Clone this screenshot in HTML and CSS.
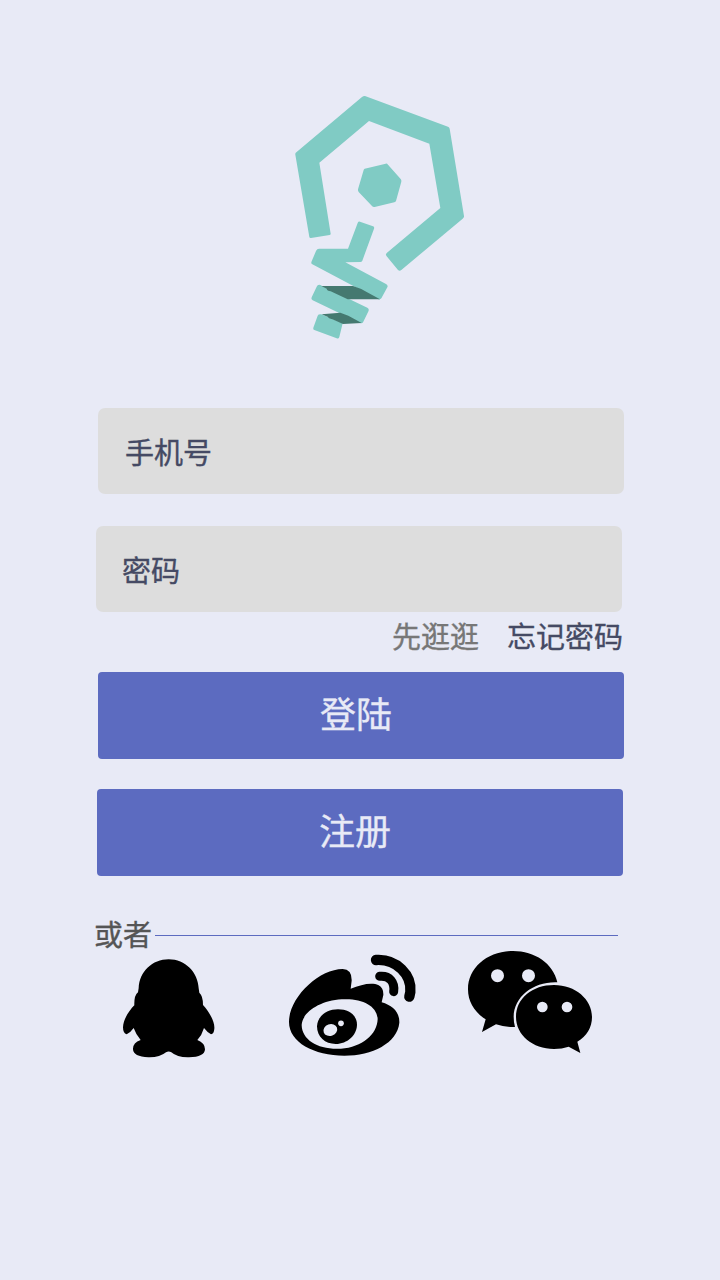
FILE: index.html
```html
<!DOCTYPE html>
<html lang="zh-CN">
<head>
<meta charset="utf-8">
<title>登陆</title>
<link rel="stylesheet" href="styles.css">
</head>
<body>
<main class="login">
  <svg class="logo" viewBox="0 0 600 795" aria-hidden="true">
    <g class="logo-light">
      <path d="M246 36Q253 30 261 35L504 125Q508 127 509 131L552 393Q553 397 548 401L364 555Q359 560 354 555L320 514Q315 508 321 503L481 369L448 176L267 108L118 233L152 446Q153 449 149 450L93 459Q89 460 88 456L46 209Q45 205 49 202Z"/>
      <path d="M254 251L317 236Q321 235 324 239L362 282Q365 286 364 290L348 348Q347 351 343 352L284 366Q279 367 276 363L236 321Q233 317 234 313L251 255Q252 252 254 251Z"/>
      <path d="M240 410L279 424Q284 426 282 431L247 527Q245 531 241 531L196 532L318 597Q325 601 322 607L304 640Q301 644 295 643L97 538Q92 535 95 529L108 498Q111 491 117 491L204 491L233 414Q235 409 240 410Z"/>
      <path d="M115 600Q119 597 125 602L262 668Q268 671 266 677L250 710Q247 716 240 714L98 646Q92 643 95 637L110 605Q112 601 115 600Z"/>
      <path d="M113 692Q115 687 124 688L188 715L178 756Q176 762 170 760L103 735Q98 733 100 728Z"/>
    </g>
    <g class="logo-dark">
      <path d="M124 603H219Q240 609 260 621L300 643H203L152 619Q141 617 140 611Z"/>
      <path d="M125 688L181 683L205 692L245 714L189 717L157 703Q145 700 144 696Z"/>
    </g>
  </svg>

  <form class="form">
    <div class="field field-phone">手机号</div>
    <div class="field field-password">密码</div>
    <div class="links"><a class="browse">先逛逛</a><a class="forgot">忘记密码</a></div>
    <div class="button button-login">登陆</div>
    <div class="button button-register">注册</div>
  </form>

  <div class="divider"><span class="divider-text">或者</span><i class="rule"></i></div>

  <div class="social">
    <svg class="qq" viewBox="0 0 360 360" aria-label="QQ">
      <path d="M176 43C226 43 264 82 266 130L268 143Q279 152 279 180C296 198 315 229 313 251Q312 266 303 268Q292 262 282 249Q276 270 262 285Q285 294 285 313Q284 336 237 337Q202 338 184 322Q176 317 168 322Q149 338 115 337Q70 335 69 313Q68 293 92 285Q78 269 71 249Q61 263 50 268Q39 265 39 247C40 222 58 196 73 181Q72 151 84 142L86 129C88 80 127 43 176 43Z"/>
    </svg>
    <svg class="weibo" viewBox="0 0 435 360" aria-label="微博">
      <path fill-rule="evenodd" d="M27 231C27 157 117 72 188 72Q216 73 215 107L212 131C244 119 275 111 296 121Q311 129 310 150L305 172C337 181 359 201 358 233C352 294 277 332 193 332C102 332 27 292 27 231ZM65 240C66 286 116 315 183 311C246 307 292 268 293 222C291 181 244 159 185 163C119 167 67 202 65 240Z"/>
      <path d="M111 244C112 214 140 193 174 193C207 193 231 211 231 239C230 271 202 296 167 297C135 297 111 276 111 244Z"/>
      <ellipse class="glint" cx="151" cy="255" rx="21" ry="17.500" transform="rotate(-20 151 255)"/>
      <circle class="glint" cx="183" cy="235" r="8.500"/>
      <path class="wave" d="M288 45C350 41 396 90 391 141L388 155"/>
      <path class="wave wave-small" d="M299 94C329 91 345 112 341 140"/>
    </svg>
    <svg class="wechat" viewBox="0 0 435 360" aria-label="微信">
      <path fill-rule="evenodd" d="M24 148C24 82 84 33 159 33C224 33 280 70 292 127C222 124 162 169 161 230Q161 248 165 261Q133 262 108 253L66 276L77 238C43 217 24 185 24 148ZM93 107A19.500 19.500 0 1 0 132 107A19.500 19.500 0 1 0 93 107ZM186 107A19.500 19.500 0 1 0 225 107A19.500 19.500 0 1 0 186 107Z"/>
      <path fill-rule="evenodd" d="M168 231C168 175 217 135 282 135C346 135 396 178 396 231C396 262 380 289 352 305L361 339L326 320Q306 327 282 327C218 327 168 285 168 231ZM231 201A16 16 0 1 0 263 201A16 16 0 1 0 231 201ZM305 201A16 16 0 1 0 337 201A16 16 0 1 0 305 201Z"/>
    </svg>
  </div>
</main>
</body>
</html>
```
FILE: styles.css
```css
body {
  margin: 0;
  background: #e8eaf6;
  font-family: "Noto Sans CJK SC", sans-serif;
  -webkit-text-stroke-width: 0.35px;
}

.login {
  box-sizing: border-box;
  width: 720px;
  height: 1280px;
  padding-top: 85px;
  overflow: hidden;
}

svg {
  display: block;
}

.logo {
  width: 200px;
  height: 265px;
  margin-left: 280px;
}

.logo-light {
  fill: #80cbc4;
}

.logo-dark {
  fill: #457970;
}

.form {
  display: flex;
  flex-direction: column;
  margin: 58px 0 0 96px;
  width: 528px;
}

.field {
  box-sizing: border-box;
  width: 526px;
  height: 86px;
  padding-left: 26px;
  border-radius: 7px;
  background: #ddd;
  color: #454a64;
  font-size: 29px;
  line-height: 86px;
}

.field-phone {
  margin: 0 0 32px 2px;
  padding-left: 27px;
}

.links {
  display: flex;
  justify-content: flex-end;
  gap: 28px;
  height: 60px;
  padding-right: 1px;
  font-size: 29px;
  line-height: 47px;
}

.browse {
  color: #777;
}

.forgot {
  color: #454a64;
}

.button {
  box-sizing: border-box;
  width: 526px;
  height: 87px;
  padding-right: 10px;
  border-radius: 4px;
  background: #5c6bc0;
  color: #e8eaf6;
  font-size: 36px;
  line-height: 81px;
  text-align: center;
}

.button-login {
  margin: 0 0 30px 2px;
}

.button-register {
  margin-left: 1px;
}

.divider {
  display: flex;
  align-items: center;
  gap: 3px;
  height: 40px;
  margin: 39px 0 0 94px;
  color: #555;
  font-size: 29px;
}

.divider-text {
  height: 40px;
  line-height: 36px;
}

.rule {
  width: 463px;
  height: 1px;
  margin-top: 1px;
  background: #5c6bc0;
}

.social {
  display: flex;
  align-items: flex-start;
  margin: -15px 0 0 110px;
}

.qq {
  width: 120px;
  height: 120px;
  margin-top: 5px;
}

.weibo {
  width: 145px;
  height: 120px;
  margin: 5px 0 0 50px;
}

.wechat {
  width: 145px;
  height: 120px;
  margin-left: 35px;
}

.glint {
  fill: #e8eaf6;
}

.wave {
  fill: none;
  stroke: #000;
  stroke-width: 31;
  stroke-linecap: round;
}

.wave-small {
  stroke-width: 27;
}
```
